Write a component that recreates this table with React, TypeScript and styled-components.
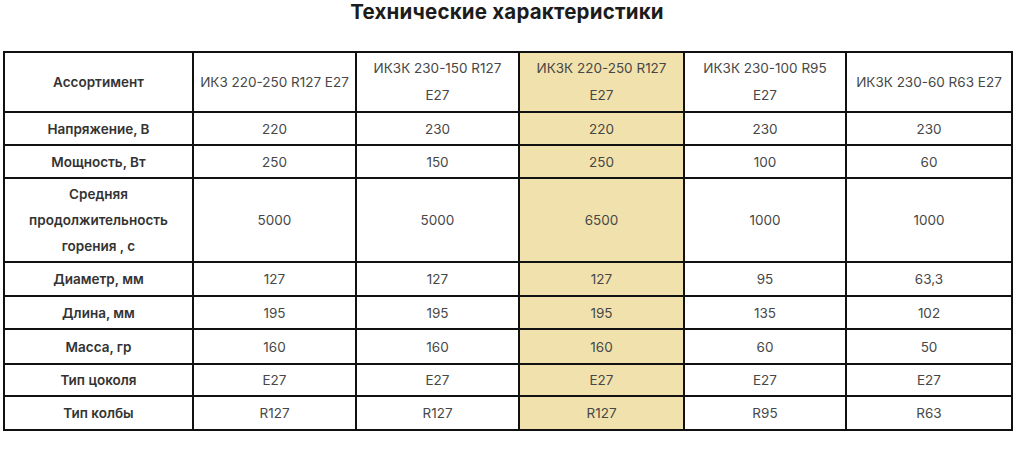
import React from 'react';
import styled, { createGlobalStyle } from 'styled-components';

const GlobalStyle = createGlobalStyle`
  html, body {
    margin: 0;
    padding: 0;
    background: #ffffff;
  }
  body {
    font-family: Inter, "Noto Sans", Arial, sans-serif;
  }
`;

const PageDiv = styled.div`
  width: 1014px;
  height: 455px;
  padding: 0 3px;
  box-sizing: border-box;
`;

const TitleH = styled.h2`
  margin: 0;
  height: 51px;
  text-align: center;
  font-size: 20.5px;
  line-height: 24px;
  font-weight: 700;
  letter-spacing: 0.2px;
  color: #1c1c1c;
`;

const SpecTable = styled.table`
  width: 1008px;
  border-collapse: collapse;
  table-layout: fixed;
  border: 2px solid #111;
`;

const Col = styled.col<{ $w: number }>`
  width: ${(p) => p.$w}px;
`;

const Row = styled.tr<{ $h: number }>`
  height: ${(p) => p.$h}px;
`;

const LabelTd = styled.td`
  border: 2px solid #111;
  padding: 2px 2px;
  text-align: center;
  vertical-align: middle;
  font-size: 13.5px;
  line-height: 26px;
  font-weight: 600;
  color: #333;
  white-space: pre-line;
`;

const ValueTd = styled.td<{ $hl?: boolean }>`
  border: 2px solid #111;
  padding: 2px 2px;
  text-align: center;
  vertical-align: middle;
  font-size: 13.5px;
  line-height: 26px;
  font-weight: 400;
  color: #474747;
  white-space: pre-line;
  background: ${(p) => (p.$hl ? '#f1e2ad' : '#ffffff')};
`;

const HeaderTd = styled(ValueTd)`
  line-height: 27px;
`;

const widths = [189, 163, 163, 165, 162, 166];

const models = [
  'ИКЗ 220-250 R127 E27',
  'ИКЗК 230-150 R127\nE27',
  'ИКЗК 220-250 R127\nE27',
  'ИКЗК 230-100 R95\nE27',
  'ИКЗК 230-60 R63 E27',
];

const rows: { label: string; values: string[]; h: number }[] = [
  { label: 'Напряжение, В', values: ['220', '230', '220', '230', '230'], h: 33 },
  { label: 'Мощность, Вт', values: ['250', '150', '250', '100', '60'], h: 33 },
  {
    label: 'Средняя\nпродолжительность\nгорения , с',
    values: ['5000', '5000', '6500', '1000', '1000'],
    h: 83,
  },
  { label: 'Диаметр, мм', values: ['127', '127', '127', '95', '63,3'], h: 34 },
  { label: 'Длина, мм', values: ['195', '195', '195', '135', '102'], h: 33 },
  { label: 'Масса, гр', values: ['160', '160', '160', '60', '50'], h: 35 },
  { label: 'Тип цоколя', values: ['E27', 'E27', 'E27', 'E27', 'E27'], h: 31 },
  { label: 'Тип колбы', values: ['R127', 'R127', 'R127', 'R95', 'R63'], h: 34 },
];

const HIGHLIGHT = 2;

const App = () => {
  return (
    <PageDiv>
      <GlobalStyle />
      <TitleH>Технические характеристики</TitleH>
      <SpecTable>
        <colgroup>
          {widths.map((w, i) => (
            <Col key={i} $w={w} />
          ))}
        </colgroup>
        <tbody>
          <Row $h={60}>
            <LabelTd>Ассортимент</LabelTd>
            {models.map((m, i) => (
              <HeaderTd key={m} $hl={i === HIGHLIGHT}>
                {m}
              </HeaderTd>
            ))}
          </Row>
          {rows.map((r) => (
            <Row key={r.label} $h={r.h}>
              <LabelTd>{r.label}</LabelTd>
              {r.values.map((v, i) => (
                <ValueTd key={i} $hl={i === HIGHLIGHT}>
                  {v}
                </ValueTd>
              ))}
            </Row>
          ))}
        </tbody>
      </SpecTable>
    </PageDiv>
  );
};

export default App;
